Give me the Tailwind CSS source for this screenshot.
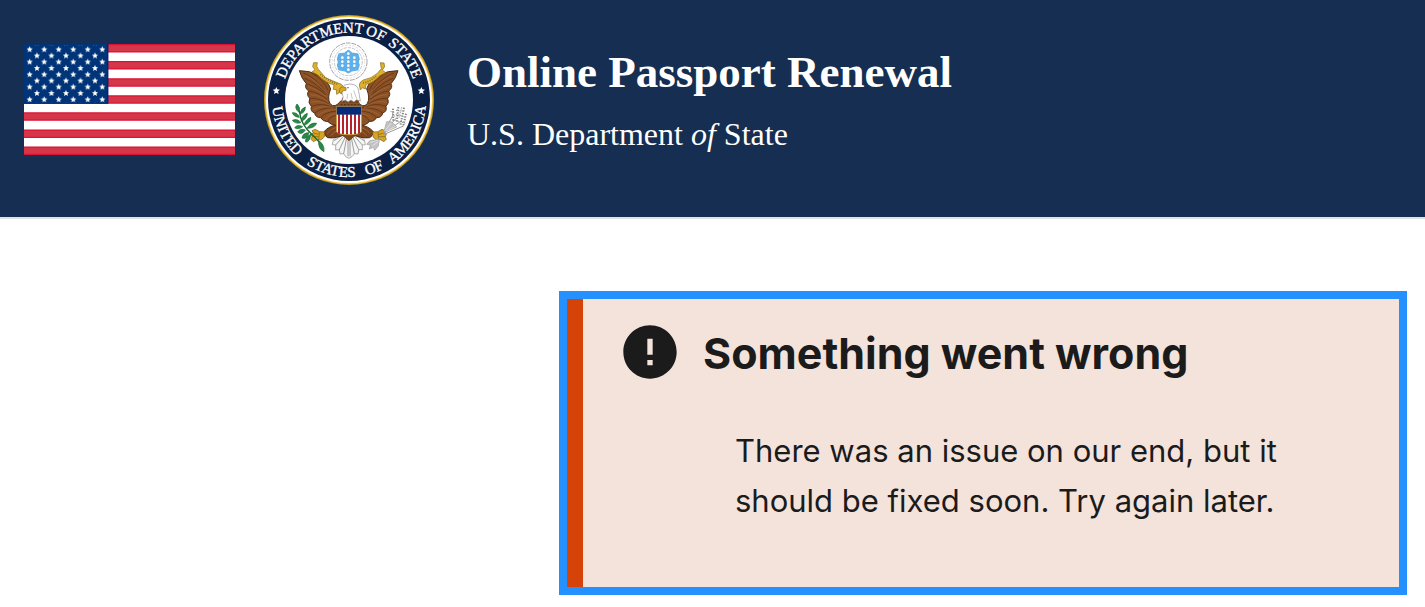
<!DOCTYPE html>
<html lang="en">
<head>
  <meta charset="UTF-8">
  <meta name="viewport" content="width=device-width, initial-scale=1.0">
  <title>Online Passport Renewal</title>
  <script src="https://cdn.jsdelivr.net/npm/@tailwindcss/browser@4"></script>
</head>
<body class="bg-white text-[#1b1b1b]">
  <header class="flex items-start border-b-2 border-[#dfe1e2] bg-[#162e51] px-6 pt-[15px] pb-8 font-['Liberation_Serif',serif] text-white">
    <!-- US flag -->
    <svg class="mt-[29px] h-[111px] w-[211px] shrink-0" viewBox="0 0 247 130" preserveAspectRatio="none" role="img" aria-label="U.S. flag">
      <defs>
        <pattern id="stars" x="-1.85" y="-1.15" width="17" height="14.66" patternUnits="userSpaceOnUse">
          <path id="star" fill="#fff" d="M8.500 3.700l1 2.500 2.600.2-2 1.700.7 2.500-2.300-1.400-2.300 1.400.7-2.500-2-1.700 2.600-.2z"/>
          <use href="#star" x="8.5" y="7.33"/>
          <use href="#star" x="-8.5" y="7.33"/>
          <use href="#star" x="8.5" y="-7.33"/>
          <use href="#star" x="-8.5" y="-7.33"/>
        </pattern>
      </defs>
      <rect width="247" height="130" fill="#fff"/>
      <path stroke="#dc1235" stroke-width="10" d="M0 5h247M0 25h247M0 45h247M0 65h247M0 85h247M0 105h247M0 125h247"/>
      <path stroke="#d63649" stroke-width="7" d="M0 5h247M0 25h247M0 45h247M0 65h247M0 85h247M0 105h247M0 125h247"/>
      <rect width="98.8" height="70" fill="#00186f"/>
      <rect width="97.8" height="69" fill="#003478"/>
      <rect x="3" y="2" width="92.5" height="66.5" fill="url(#stars)"/>
    </svg>

    <!-- Department seal -->
    <svg class="ml-[29px] size-[170px] shrink-0" viewBox="14 14 510 510" role="img" aria-label="Department of State seal">
      <defs>
        <path id="arc-top" d="M67 269A202 202 0 0 1 471 269"/>
        <path id="arc-bottom" d="M38 269A231 231 0 0 0 500 269"/>
        <g id="wing">
          <path fill="#8d5124" stroke="#4e3019" stroke-width="3" stroke-linejoin="round" d="M120 181Q150 180 178 195Q206 210 214 236Q203 262 212 280Q226 296 244 272L262 270V350L232 346Q216 345 206 334Q190 334 184 322Q168 322 166 308Q152 304 156 288Q145 278 151 264Q140 252 148 242Q134 232 141 220Q126 204 120 181Z"/>
          <path fill="none" stroke="#4e3019" stroke-width="2" d="M132 188Q165 200 196 238M141 220Q170 228 200 254M148 242Q178 246 204 268M151 264Q180 262 210 282M156 288Q186 276 218 290M166 308Q190 290 228 292M184 322Q200 304 232 302M206 334Q212 316 236 314M160 190Q190 204 206 240M135 204Q165 215 196 246"/>
          <path fill="none" stroke="#a9683a" stroke-width="2" d="M138 196Q168 208 198 242M146 229Q174 236 202 260M153 253Q182 254 206 274M153 276Q184 268 214 286M161 298Q188 284 222 292M175 316Q196 298 230 298M196 330Q206 312 234 310"/>
          <path fill="#7e451d" stroke="#4e3019" stroke-width="3" d="M234 344Q210 346 194 364Q196 378 205 382Q230 386 262 370Z"/>
          <path fill="none" stroke="#b47339" stroke-width="2" d="M228 352Q212 358 203 370M240 358Q224 364 214 376"/>
          <path fill="#d9a521" stroke="#7c5b14" stroke-width="2" d="M196 365L181 364 168 357 158 361 162 368 155 372 158 379 155 387 162 394 173 388 184 389 195 380Z"/>
          <path fill="none" stroke="#7c5b14" stroke-width="2" d="M162 368L177 372M158 379L177 379M180 365L178 388"/>
        </g>
      </defs>
      <circle cx="269" cy="269" r="255" fill="#c79b22"/>
      <circle cx="269" cy="269" r="252" fill="#f0c443"/>
      <circle cx="269" cy="269" r="249" fill="#fff"/>
      <circle cx="269" cy="269" r="243" fill="#0b1f45"/>
      <circle cx="269" cy="269" r="192" fill="#fff"/>
      <g class="font-['Liberation_Serif',serif]" fill="#fff" stroke="#fff" stroke-width="1" font-size="45" text-anchor="middle">
        <text><textPath href="#arc-top" startOffset="33.3%">DEPARTMENT</textPath></text>
        <text><textPath href="#arc-top" startOffset="62.2%">OF</textPath></text>
        <text><textPath href="#arc-top" startOffset="79.7%">STATE</textPath></text>
        <text><textPath href="#arc-bottom" startOffset="14.6%">UNITED</textPath></text>
        <text><textPath href="#arc-bottom" startOffset="42.1%">STATES</textPath></text>
        <text><textPath href="#arc-bottom" startOffset="61.2%">OF</textPath></text>
        <text><textPath href="#arc-bottom" startOffset="83.2%">AMERICA</textPath></text>
      </g>
      <path fill="#fff" d="M51 230l3 7 8 1-6 5 2 8-7-4-7 4 2-8-6-5 8-1zM486 230l3 7 8 1-6 5 2 8-7-4-7 4 2-8-6-5 8-1z"/>

      <!-- glory of stars -->
      <circle cx="267" cy="154" r="56" fill="#fff" stroke="#a0a0a0" stroke-width="3" stroke-dasharray="14 3"/>
      <circle cx="267" cy="154" r="49" fill="none" stroke="#ddd" stroke-width="3" stroke-dasharray="6 5"/>
      <circle cx="267" cy="154" r="42" fill="#fff" stroke="#a8a8a8" stroke-width="2" stroke-dasharray="10 3"/>
      <path fill="#5fb0ea" stroke="#5fb0ea" stroke-width="7" stroke-linejoin="round" d="M267 122l10 8 17 2 4 14-3 9 3 9-4 13-17 3-10 6-10-6-17-3-4-13 3-9-3-9 4-14 17-2z"/>
      <path stroke="#fff" stroke-width="8" stroke-linecap="round" stroke-dasharray="0 18" d="M267 130h1M249 142h37M249 154h37M249 166h37M267 178h1"/>

      <!-- tail -->
      <path fill="#f6f6f6" stroke="#8a8a8a" stroke-width="2" stroke-linejoin="round" d="M250 366L222 388 219 403 229 404 229 419 240 418 242 431 253 430 260 440 269 444 278 439 285 430 296 431 298 418 309 418 309 404 318 403 315 388 288 366Z"/>
      <path fill="none" stroke="#707070" stroke-width="2" d="M254 376L229 404M258 380L240 418M262 382L253 430M266 384V438M272 384V438M276 382L285 430M280 380L298 418M284 376L309 404M250 374L224 391M288 374L314 391"/>

      <use href="#wing"/>
      <use href="#wing" transform="translate(536 0) scale(-1 1)"/>
      <path fill="#7e451d" stroke="#4e3019" stroke-width="2" d="M242 368L269 391 296 368Z"/>
      <path fill="#8d5124" d="M244 290L248 262H296L304 290V345H236Z"/>
      <path fill="none" stroke="#4e3019" stroke-width="3" stroke-dasharray="6 4" d="M250 275H298M244 283H302"/>

      <!-- ribbon -->
      <path fill="#ddb02d" stroke="#846516" stroke-width="2" stroke-linejoin="round" d="M174 157L163 157 160 169 167 178 158 185 174 193Q202 220 224 223L222 237 231 238 232 252 243 245 256 232 246 222Q218 211 199 202L177 177Q169 168 174 157Z"/>
      <path fill="#ddb02d" stroke="#846516" stroke-width="2" stroke-linejoin="round" d="M363 157L374 158 376 169 369 179 379 187 362 196Q342 218 320 222L318 236 310 232 303 239 300 224Q300 215 312 209Q337 204 353 190L366 175Z"/>
      <path fill="none" stroke="#87681b" stroke-width="5" stroke-dasharray="3 4" d="M183 192Q205 211 234 221M311 218Q333 213 350 198"/>

      <!-- head -->
      <path fill="#fff" stroke="#8f8f8f" stroke-width="2" d="M248 232Q254 221 271 221Q297 221 298 243L303 272 291 268 284 275 275 269 266 275 258 269 248 273Q255 258 248 248Z"/>
      <path fill="none" stroke="#aaa" stroke-width="2" d="M283 240L292 265M275 248L279 266M265 250L263 266"/>
      <path fill="#dca61f" stroke="#80601a" stroke-width="2" d="M260 232Q244 225 240 238Q237 247 247 251Q246 240 260 240Z"/>
      <circle cx="266" cy="232" r="2" fill="#333"/>

      <!-- shield -->
      <path fill="#fff" stroke="#c9a243" stroke-width="3" d="M232 289H306V363Q305 373 269 373Q233 373 232 363Z"/>
      <path stroke="#b4232d" stroke-width="6" d="M239 312V370M251 312V371M263 312V372M275 312V372M287 312V371M299 312V370"/>
      <path fill="#062b78" d="M232 289H306V313H232Z"/>

      <!-- olive branch -->
      <g fill="#28894a" stroke="#17682e" stroke-width="2">
        <path fill="none" stroke-width="4" d="M120 301Q124 345 160 374L181 397 190 420"/>
        <path d="M119 306Q103 293 113 281Q125 291 119 306ZM122 311Q124 295 138 290Q138 307 122 311ZM120 321Q103 320 99 307Q116 306 120 321ZM125 333Q127 316 144 309Q144 326 125 333ZM125 337Q108 342 99 330Q114 323 125 337ZM134 345Q138 328 154 321Q157 337 134 345ZM130 349Q115 360 106 352Q114 341 130 349ZM143 354Q154 335 172 339Q166 354 143 354ZM138 359Q127 376 115 365Q122 353 138 359ZM149 367Q142 389 128 383Q130 367 149 367ZM155 371Q151 397 139 395Q136 381 155 371ZM178 391Q196 402 194 424Q175 415 178 391Z"/>
      </g>

      <!-- arrows -->
      <g fill="none" stroke="#999" stroke-width="3">
        <path d="M371 369L402 313M371 369L411 323M372 371L428 330M373 373L432 347M366 379L333 397"/>
        <path fill="#c4c4c4" stroke="#a0a0a0" stroke-width="2" d="M373 366L382 334 398 335 412 350 391 359ZM360 387L331 391 322 402 333 404 330 416 342 411 346 420 357 407Z"/>
        <path stroke="#808080" stroke-width="6" stroke-dasharray="4 4" d="M401 295L402 332M417 290L412 337M434 292L423 346M440 310L431 350"/>
        <path stroke="#999" stroke-width="3" stroke-dasharray="4 3" d="M394 302L408 320M410 300L426 303M409 311L440 322M408 330L438 339M427 291L419 322"/>
        <path stroke="#eee" stroke-width="2" d="M377 361L396 338M380 363L409 348M333 396L356 389M339 407L357 394"/>
      </g>
    </svg>

    <div class="ml-[33px] mt-[31px]">
      <div class="text-[45px] leading-[52px] font-bold">Online Passport Renewal</div>
      <div class="mt-3 text-[32px] leading-[48px]">U.S. Department <em>of</em> State</div>
    </div>
  </header>

  <main class="flex justify-end pt-[72px] pr-[18px] font-[Inter,sans-serif]">
    <div role="alert" class="w-full max-w-[848px] border-8 border-[#2491ff]">
      <div class="border-l-[16px] border-[#d54309] bg-[#f4e3db] pt-[21px] pb-[61px] pl-[35px]">
        <div class="flex items-start">
          <svg class="size-16 shrink-0" viewBox="0 0 24 24" fill="#1b1b1b" aria-hidden="true">
            <path d="M12 2C6.48 2 2 6.48 2 12s4.480 10 10 10 10-4.480 10-10S17.520 2 12 2zm1 15h-2v-2h2v2zm0-4h-2V7h2v6z"/>
          </svg>
          <h1 class="ml-[21px] text-[43px] leading-[66px] font-bold">Something went wrong</h1>
        </div>
        <p class="mt-10 ml-[117px] max-w-[560px] text-[31px] leading-[50px]">There was an issue on our end, but it should be fixed soon. Try again later.</p>
      </div>
    </div>
  </main>
</body>
</html>
